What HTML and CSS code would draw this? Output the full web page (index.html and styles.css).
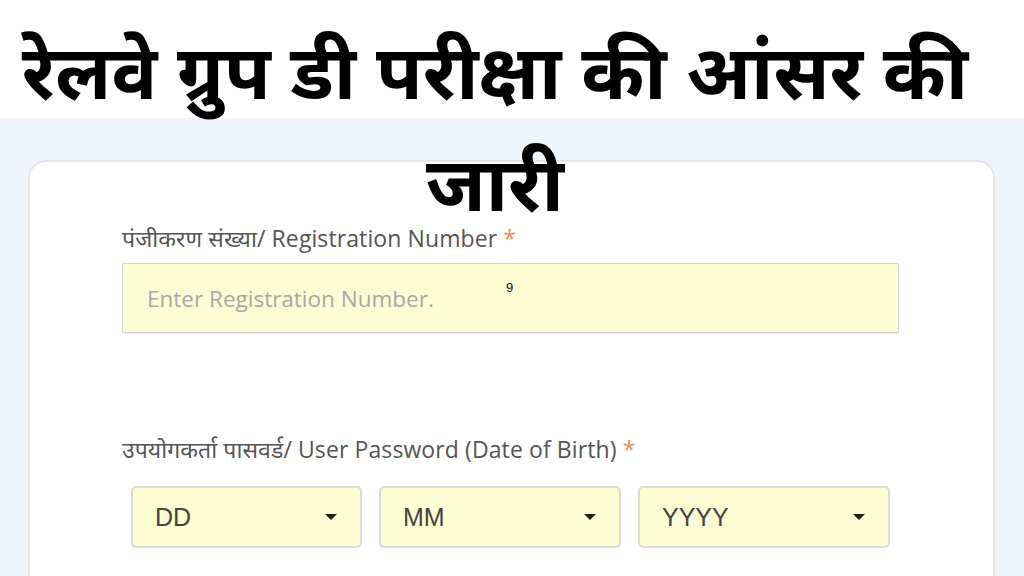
FILE: index.html
```html
<!DOCTYPE html>
<html lang="hi">
<head>
    <meta charset="UTF-8">
    <meta name="viewport" content="width=device-width, initial-scale=1.0">
    <title>रेलवे ग्रुप डी परीक्षा की आंसर की जारी</title>
    <link rel="stylesheet" href="styles.css">
</head>
<body>
    <div class="top-band"></div>
    <div class="page">
        <form class="card">
            <label class="field-label" for="regNo">पंजीकरण संख्या/ Registration Number <span class="req">*</span></label>
            <div class="input-wrap">
                <input class="text-input" id="regNo" type="text" placeholder="Enter Registration Number.">
                <span class="stray">9</span>
            </div>

            <label class="field-label label-gap">उपयोगकर्ता पासवर्ड/ User Password (Date of Birth) <span class="req">*</span></label>
            <div class="dob-row">
                <div class="select-box"><span>DD</span><i class="caret"></i></div>
                <div class="select-box"><span>MM</span><i class="caret"></i></div>
                <div class="select-box"><span>YYYY</span><i class="caret"></i></div>
            </div>
        </form>
    </div>

    <h1 class="headline">रेलवे ग्रुप डी परीक्षा की आंसर की जारी</h1>
</body>
</html>
```

FILE: styles.css
```css
:root {
    --color-page: #eef5fd;
    --color-card-border: #e4e6e8;
    --color-field: #fdfdd3;
    --color-field-border: #d3d3d3;
    --color-label: #555;
    --color-star: #f58a4b;
    --font-ui: 'Open Sans', 'Noto Sans', sans-serif;
}

html, body {
    margin: 0;
    padding: 0;
    height: 100%;
    overflow: hidden;
}

body {
    position: relative;
    background: #fff;
    font-family: var(--font-ui);
}

.top-band {
    height: 118px;
    background: #fff;
}

.page {
    background: var(--color-page);
    padding: 42px 29px 0 28px;
    height: 416px;
    overflow: hidden;
}

.card {
    background: #fff;
    border: 2px solid var(--color-card-border);
    border-radius: 18px;
    height: 480px;
    padding: 61px 0 0 92px;
    box-sizing: border-box;
}

.field-label {
    display: block;
    font-size: 23px;
    line-height: 30px;
    color: var(--color-label);
    letter-spacing: 0.1px;
}

.req {
    color: var(--color-star);
}

.input-wrap {
    position: relative;
    width: 777px;
    margin-top: 10px;
}

.text-input {
    display: block;
    width: 100%;
    height: 70px;
    box-sizing: border-box;
    padding: 0 24px;
    background: var(--color-field);
    border: 1px solid var(--color-field-border);
    border-radius: 2px;
    box-shadow: 0 1px 1px rgba(0, 0, 0, 0.08);
    font-family: var(--font-ui);
    font-size: 22.5px;
    color: #333;
}

.text-input::placeholder {
    color: #a8a8a8;
}

.stray {
    position: absolute;
    top: 17px;
    left: 384px;
    font-family: 'Liberation Sans', Arial, sans-serif;
    font-size: 13px;
    color: #111;
}

.label-gap {
    margin-top: 101px;
}

.dob-row {
    display: grid;
    grid-template-columns: 231px 242px 252px;
    gap: 17px;
    margin: 22px 0 0 9px;
}

.select-box {
    display: flex;
    align-items: center;
    justify-content: space-between;
    height: 62px;
    box-sizing: border-box;
    padding: 0 23px 0 22px;
    background: var(--color-field);
    border: 2px solid #dcdcd0;
    border-radius: 5px;
    font-family: 'Liberation Sans', Arial, sans-serif;
    font-size: 25px;
    color: #444;
}

.caret {
    width: 0;
    height: 0;
    border-left: 6px solid transparent;
    border-right: 6px solid transparent;
    border-top: 6px solid #222;
}

.headline {
    position: absolute;
    top: 0;
    left: 0;
    right: 0;
    margin: 0;
    padding: 14px 46px 0 12px;
    text-align: center;
    font-family: 'Noto Sans', sans-serif;
    font-size: 76px;
    font-weight: 700;
    line-height: 112px;
    color: #000;
}
```
